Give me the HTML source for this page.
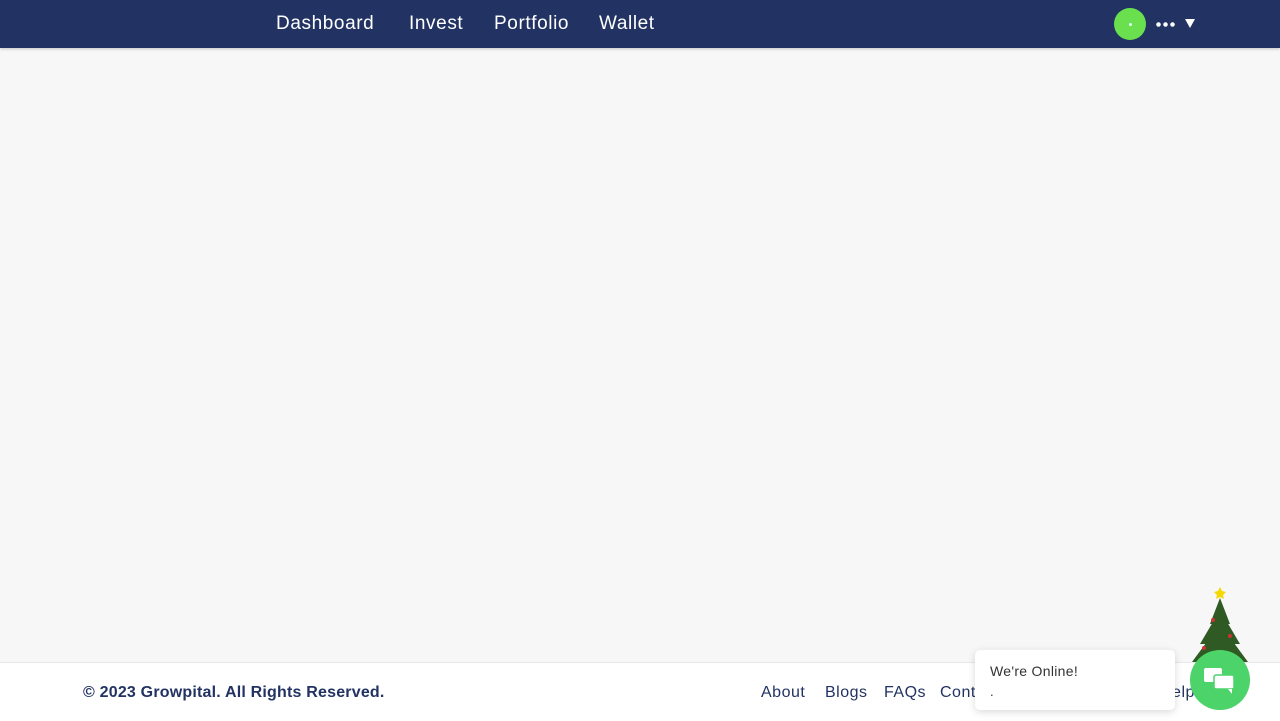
<!DOCTYPE html>
<html><head><style>
body{margin:0;width:1280px;height:720px;background:#f7f7f7;font-family:"Liberation Sans",sans-serif;position:relative;overflow:hidden}
.nav{position:absolute;left:0;top:0;width:1280px;height:48px;background:#223363;box-shadow:0 1px 3px rgba(0,0,0,.2)}
.nav a{position:absolute;top:13px;color:#fff;font-size:19px;letter-spacing:0.6px;text-decoration:none}
.foot{position:absolute;left:0;top:662px;width:1280px;height:58px;background:#fff;border-top:1px solid #e8e8e8}
.foot span{position:absolute;top:21px;font-size:16px;letter-spacing:0.5px;color:#223363}
</style></head><body>
<div class="nav">
<a style="left:276px">Dashboard</a><a style="left:409px">Invest</a><a style="left:494px">Portfolio</a><a style="left:599px">Wallet</a>
<div style="position:absolute;left:1114px;top:8px;width:32px;height:32px;border-radius:50%;background:#6ae04f"><div style="position:absolute;left:15px;top:15px;width:3px;height:3px;border-radius:50%;background:#dff"></div></div>
<div style="position:absolute;left:1155px;top:22px;width:20px;height:5px;background:radial-gradient(circle,#fff 2px,transparent 2.5px) 0 0/7px 5px"></div>
<div style="position:absolute;left:1185px;top:19px;border-left:5px solid transparent;border-right:5px solid transparent;border-top:9px solid #fff"></div>
</div>
<div class="foot">
<span style="left:83px;font-weight:bold;letter-spacing:0.2px">© 2023 Growpital. All Rights Reserved.</span>
<span style="left:761px">About</span><span style="left:825px">Blogs</span><span style="left:884px">FAQs</span><span style="left:940px">Contact</span><span style="left:1160px">Help</span>
</div>
<div style="position:absolute;left:975px;top:650px;width:200px;height:60px;background:#fff;border-radius:5px;box-shadow:0 2px 8px rgba(0,0,0,.15)">
<div style="position:absolute;left:15px;top:13px;font-size:14px;color:#333;letter-spacing:0.3px">We're Online!</div>
<div style="position:absolute;left:15px;top:34px;font-size:13px;color:#333">.</div></div>
<svg style="position:absolute;left:1188px;top:584px" width="64" height="90" viewBox="0 0 64 90">
<polygon points="32,3 34,7 38,8 35,11 36,15 32,13 28,15 29,11 26,8 30,7" fill="#f5d800"/>
<polygon points="32,14 22,40 42,40" fill="#2f5a24"/>
<polygon points="32,26 12,60 52,60" fill="#2f5a24"/>
<polygon points="32,40 4,78 60,78" fill="#2f5a24"/>
<circle cx="25" cy="36" r="2" fill="#c33"/><circle cx="42" cy="52" r="2" fill="#c33"/><circle cx="16" cy="64" r="2" fill="#c33"/>
</svg>
<div style="position:absolute;left:1190px;top:650px;width:60px;height:60px;border-radius:50%;background:#4cd36a">
<svg width="60" height="60" viewBox="0 0 60 60"><rect x="14" y="18" width="18" height="14" rx="2" fill="#fff"/><rect x="24" y="25" width="20" height="14" rx="2" fill="#fff" stroke="#4cd36a" stroke-width="1.5"/><path d="M38 39 l4 5 v-5z" fill="#fff"/></svg></div>
</body></html>
